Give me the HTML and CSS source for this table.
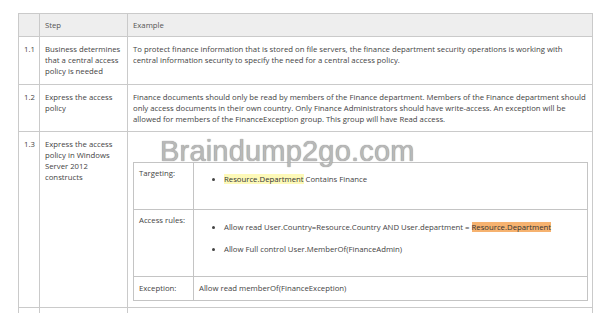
FILE: index.html
```html
<!DOCTYPE html>
<html>
<head>
<meta charset="utf-8">
<link rel="stylesheet" href="styles.css">
</head>
<body>
<div class="page">
  <table class="main">
    <colgroup>
      <col class="c-num">
      <col class="c-step">
      <col class="c-ex">
    </colgroup>
    <tr class="head">
      <th></th>
      <th>Step</th>
      <th>Example</th>
    </tr>
    <tr class="r1">
      <td>1.1</td>
      <td>Business determines that a central access policy is needed</td>
      <td>To protect finance information that is stored on file servers, the finance department security operations is working with central information security to specify the need for a central access policy.</td>
    </tr>
    <tr class="r2">
      <td>1.2</td>
      <td>Express the access policy</td>
      <td>Finance documents should only be read by members of the Finance department. Members of the Finance department should only access documents in their own country. Only Finance Administrators should have write-access. An exception will be allowed for members of the FinanceException group. This group will have Read access.</td>
    </tr>
    <tr class="r3">
      <td>1.3</td>
      <td>Express the access policy in Windows Server 2012 constructs</td>
      <td class="nested-cell">
        <table class="inner">
          <colgroup>
            <col class="c-label">
            <col>
          </colgroup>
          <tr class="i-target">
            <td>Targeting:</td>
            <td>
              <ul class="rules first">
                <li><span class="hl-yellow">Resource.Department</span> Contains Finance</li>
              </ul>
            </td>
          </tr>
          <tr class="i-access">
            <td>Access rules:</td>
            <td>
              <ul class="rules">
                <li>Allow read User.Country=Resource.Country AND User.department = <span class="hl-orange">Resource.Department</span></li>
                <li>Allow Full control User.MemberOf(FinanceAdmin)</li>
              </ul>
            </td>
          </tr>
          <tr class="i-exc">
            <td>Exception:</td>
            <td>Allow read memberOf(FinanceException)</td>
          </tr>
        </table>
      </td>
    </tr>
    <tr class="r4">
      <td></td>
      <td></td>
      <td></td>
    </tr>
  </table>
  <div class="watermark">Braindump2go.com</div>
</div>
</body>
</html>
```
FILE: styles.css
```css
html, body {
  margin: 0;
  padding: 0;
  overflow: hidden;
  background: #ffffff;
}
body {
  font-family: "Open Sans", "Noto Sans", sans-serif;
  font-size: 7.75px;
  line-height: 11px;
  color: #444444;
}
.page {
  position: relative;
  padding: 13px 0 0 18px;
}
table {
  border-collapse: collapse;
  table-layout: fixed;
}
.main {
  width: 574px;
}
.c-num { width: 21px; }
.c-step { width: 88px; }
.c-ex { width: 465px; }
.main th,
.main td {
  border: 1px solid #cacaca;
  vertical-align: top;
  text-align: left;
  padding: 7px 5px 0 5px;
}
.main th {
  background: #eeeeee;
  font-weight: normal;
  color: #555555;
  padding-top: 6px;
  height: 16px;
}
.r1 td { height: 40px; }
.r2 td { height: 39px; }
.r3 > td { height: 168px; }
.r4 td { height: 10px; }
.main td.nested-cell {
  padding-top: 30px;
  height: 145px;
}
.inner {
  width: 455px;
}
.c-label { width: 60px; }
.inner td {
  border: 1px solid #c4c4c4;
  padding: 5px 5px 0 5px;
  vertical-align: top;
}
.i-target td { height: 41px; }
.i-access td { height: 61px; }
.i-exc td {
  height: 17px;
  padding-top: 6px;
}
.rules {
  margin: 6px 0 0 0;
  padding-left: 25px;
  list-style: disc;
}
.i-access .rules {
  margin-top: 7px;
}
.rules li + li {
  margin-top: 11px;
}
.hl-yellow {
  background: #fdf9b8;
  color: #333333;
}
.hl-orange {
  background: #f6b26f;
  color: #333333;
}
.watermark {
  position: absolute;
  left: 160px;
  top: 134px;
  font-family: "Liberation Sans", Arial, sans-serif;
  font-size: 29px;
  line-height: 34px;
  color: #b8b8b8;
  text-shadow: 0 0 1px #7a7a7a;
  letter-spacing: 0.2px;
}
```
